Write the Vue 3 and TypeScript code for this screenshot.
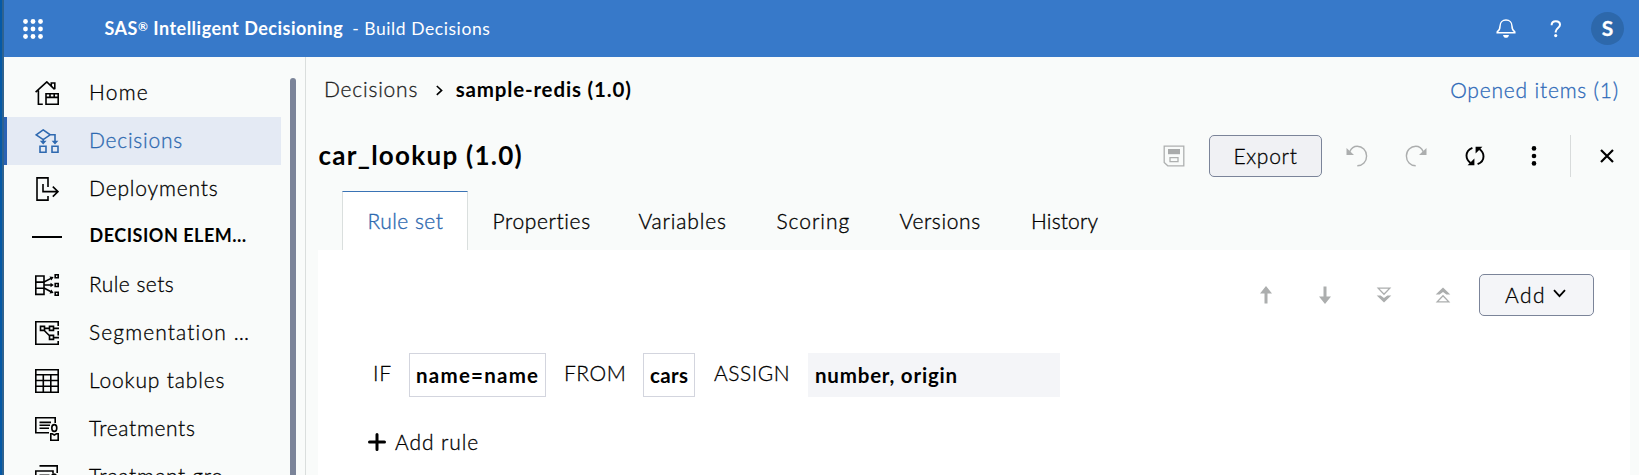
<script setup lang="ts">
interface NavItem {
  label: string
  icon: string
  tracking: number
  active?: boolean
  heading?: boolean
}

const navItems: NavItem[] = [
  { label: 'Home', icon: 'home', tracking: 1.2 },
  { label: 'Decisions', icon: 'decisions', tracking: 0.75, active: true },
  { label: 'Deployments', icon: 'deployments', tracking: 0.83 },
  { label: 'DECISION ELEM…', icon: 'line', tracking: 0.52, heading: true },
  { label: 'Rule sets', icon: 'rules', tracking: 0.45 },
  { label: 'Segmentation …', icon: 'segment', tracking: 1.12 },
  { label: 'Lookup tables', icon: 'table', tracking: 0.85 },
  { label: 'Treatments', icon: 'treatment', tracking: 0.65 },
  { label: 'Treatment gro', icon: 'group', tracking: 0.65 },
]

const tabs = [
  { label: 'Rule set', tracking: 0.45 },
  { label: 'Properties', tracking: 0.6 },
  { label: 'Variables', tracking: 0.83 },
  { label: 'Scoring', tracking: 0.95 },
  { label: 'Versions', tracking: 0.6 },
  { label: 'History', tracking: 0.15 },
]
const activeTab = 'Rule set'
</script>

<template>
  <div class="app">
    <div class="edge"></div>
    <div class="shell">
      <header class="topbar">
        <svg class="launcher" width="20" height="20" viewBox="0 0 20 20">
          <template v-for="r in 3" :key="r">
            <circle v-for="c in 3" :key="c" :cx="c * 7.5 - 5" :cy="r * 7.5 - 5" r="2.4" fill="#fff" />
          </template>
        </svg>
        <span class="product">SAS<span class="mark">®</span> Intelligent Decisioning</span>
        <span class="area">- Build Decisions</span>
        <div class="top-actions">
          <svg class="bell" width="20" height="20" viewBox="0 0 20 20" fill="none" stroke="#fff" stroke-width="1.5">
            <path d="M1.2 13.8H18.8V12.8C16.6 11.4 16 10.3 16 7.2C16 3.5 13.4 1.1 10 1.1S4 3.5 4 7.2C4 10.3 3.4 11.4 1.2 12.8Z" />
            <path d="M7 16H13C12.6 18 11.4 18.8 10 18.8S7.4 18 7 16Z" fill="#fff" stroke="none" />
          </svg>
          <svg class="help" width="12" height="18" viewBox="0 0 12 18" fill="none" stroke="#fff" stroke-width="2">
            <path d="M1.6 5.2C1.6 2.6 3.3 1.3 5.8 1.3S10 2.7 10 4.8C10 7.9 5.7 8.2 5.7 11.8V12.4" />
            <circle cx="5.7" cy="15.6" r="1.6" fill="#fff" stroke="none" />
          </svg>
          <div class="avatar">S</div>
        </div>
      </header>

      <div class="body">
        <nav class="sidebar">
          <ul class="nav">
            <li v-for="item in navItems" :key="item.label" class="nav-item" :class="{ active: item.active, heading: item.heading }">
              <svg v-if="item.icon === 'line'" class="rule" width="30" height="2" viewBox="0 0 30 2"><path d="M0 1H30" stroke="#000" stroke-width="2" /></svg>
              <svg v-else class="nav-icon" width="24" height="24" viewBox="0 0 24 24" fill="none" stroke="currentColor" stroke-width="1.6">
                <g v-if="item.icon === 'home'">
                  <path d="M.6 11.2L11.8.9L19.6 8.3M3.4 9.5V23.2H7.8M16.3 4.8V2H19.8V8.3" />
                  <path d="M11 12.8H23.2V23.2H11ZM11 16.4H23.2M15 12.8V16.4M19.2 12.8V16.4" />
                </g>
                <g v-else-if="item.icon === 'decisions'">
                  <path d="M1.2 5.8L8.2.9L15.2 5.8L8.2 10.6ZM15.2 5.8H20V13M8.2 10.6V13M5 17.3H11V23.2H5ZM17 17.3H23V23.2H17Z" />
                  <path d="M4.8 11.8H11.6L8.2 15.6ZM16.6 11.8H23.4L20 15.6Z" fill="currentColor" stroke="none" />
                </g>
                <g v-else-if="item.icon === 'deployments'">
                  <path d="M13 10V.9H2V23.1H13V19" />
                  <path d="M8 7V14.6H23M17.8 9.6L23 14.6L17.8 19.6" />
                </g>
                <g v-else-if="item.icon === 'rules'">
                  <path d="M.8 3H9V21.4H.8ZM.8 9.1H9M.8 15.3H9" />
                  <path d="M9 9L17 4.9M9 12H17M9 15L17 19.2" />
                  <path d="M14.5 3.6L18.6 4L16.4 7.4ZM15.5 9.8L18.8 12L15.5 14.2ZM16.4 16.6L18.6 20L14.5 20.4Z" fill="currentColor" stroke="none" />
                  <path d="M20.2 1.7H23.2V4.7H20.2ZM20.2 10.5H23.2V13.5H20.2ZM20.2 19.3H23.2V22.3H20.2Z" />
                </g>
                <g v-else-if="item.icon === 'segment'">
                  <path d="M23.2 5V.8H.8V23.2H23.2V20M23.2 10V14.5" />
                  <path d="M5.5 5.4H9.5V9.4H5.5ZM14.5 5.4H18.5V9.4H14.5ZM14.5 14.4H18.5V18.4H14.5ZM9.5 7.4H14.5M18.5 7.4H24M18.5 16.6H24M9 9.2L14.8 15" />
                </g>
                <path v-else-if="item.icon === 'table'" d="M.8.8H23.2V23.2H.8ZM.8 5.8H23.2M.8 11.5H23.2M.8 17.2H23.2M8.3 5.8V23M15.8 5.8V23" />
                <g v-else-if="item.icon === 'treatment'">
                  <path d="M14 15.8H.8V.8H20.2V6M4.5 5.4H16M4.5 8.3H15M4.5 11.2H14" />
                  <ellipse cx="19.3" cy="11" rx="2.5" ry="3.4" />
                  <path d="M15.8 23.2V16.8H17.2L19.3 18L21.5 16.8H23.2V23.2Z" />
                </g>
                <g v-else>
                  <path d="M4.5.9H22.2V8M.8 21V6H18V8.5M4.5 10.4H14.5M4.5 13.4H14" />
                  <ellipse cx="19" cy="12.5" rx="2.5" ry="3.4" />
                </g>
              </svg>
              <span class="nav-label" :style="{ letterSpacing: item.tracking + 'px' }">{{ item.label }}</span>
            </li>
          </ul>
          <div class="scrollbar"></div>
        </nav>

        <main class="main">
          <div class="crumbs">
            <span class="crumb">Decisions</span>
            <svg class="crumb-sep" width="7" height="11" viewBox="0 0 7 11" fill="none" stroke="#000" stroke-width="1.6"><path d="M.8 1L5.6 5.4L.8 9.8" /></svg>
            <span class="crumb-current">sample-redis (1.0)</span>
            <span class="opened">Opened items (1)</span>
          </div>

          <div class="titlebar">
            <h1 class="title">car_lookup (1.0)</h1>
            <svg class="save" width="22" height="22" viewBox="0 0 22 22" fill="none" stroke="#aeb0b0" stroke-width="1.3">
              <path d="M1.2 1.2H20.8V20.8H4.8L1.2 17.4Z" />
              <path d="M5 4H17V9.2H5Z" fill="#a9abab" stroke="none" />
              <path d="M7 12.6H15V16.6H7Z" />
            </svg>
            <button class="btn export">Export</button>
            <div class="icon-btn muted">
              <svg width="22" height="22" viewBox="0 0 22 22" fill="none" stroke="currentColor" stroke-width="1.4">
                <path d="M3.8 6.6C5.3 3.2 8 1.3 11.2 1.3C16.3 1.3 20.6 5.3 20.6 11S16.6 20.8 11.3 20.8" />
                <path d="M.5 3V10.1H8Z" fill="currentColor" stroke="none" />
              </svg>
            </div>
            <div class="icon-btn muted">
              <svg width="22" height="22" viewBox="0 0 22 22" fill="none" stroke="currentColor" stroke-width="1.4">
                <path d="M18.2 6.6C16.7 3.2 14 1.3 10.8 1.3C5.7 1.3 1.4 5.3 1.4 11S5.4 20.8 10.7 20.8" />
                <path d="M21.5 3V10.1H14Z" fill="currentColor" stroke="none" />
              </svg>
            </div>
            <div class="icon-btn">
              <svg width="20" height="20" viewBox="0 0 20 20" fill="none" stroke="currentColor" stroke-width="1.9">
                <path d="M7.4 1.8C3.6 3.4 1.5 6.2 1.5 9.6C1.5 13 3.2 15.3 5.6 17" />
                <path d="M12.6 18.2C16.4 16.6 18.5 13.8 18.5 10.4C18.5 7 16.8 4.7 14.4 3" />
                <path d="M2.6 19.3H9.4V12.4ZM17.4.7H10.6V7.6Z" fill="currentColor" stroke="none" />
              </svg>
            </div>
            <div class="icon-btn">
              <svg width="6" height="20" viewBox="0 0 6 20"><circle cx="3" cy="2.4" r="2.3" /><circle cx="3" cy="10" r="2.3" /><circle cx="3" cy="17.4" r="2.3" /></svg>
            </div>
            <div class="divider"></div>
            <svg class="close" width="14" height="14" viewBox="0 0 14 14" stroke="#000" stroke-width="2.2"><path d="M1 1L13 13M13 1L1 13" /></svg>
          </div>

          <div class="tabs">
            <div v-for="tab in tabs" :key="tab.label" class="tab" :class="{ selected: tab.label === activeTab }" :style="{ letterSpacing: tab.tracking + 'px' }">{{ tab.label }}</div>
          </div>

          <section class="panel">
            <div class="toolbar">
              <div class="icon-btn muted"><svg width="12" height="18" viewBox="0 0 12 18" fill="currentColor"><path d="M6 0L12 7.4H7.5V17.5H4.5V7.4H0Z" /></svg></div>
              <div class="icon-btn muted"><svg width="12" height="18" viewBox="0 0 12 18" fill="currentColor"><path d="M6 18L12 10.6H7.5V.5H4.5V10.6H0Z" /></svg></div>
              <div class="icon-btn muted">
                <svg width="16" height="16" viewBox="0 0 16 16"><path d="M2.2 1.2H13.8L8 7.2Z" fill="none" stroke="currentColor" stroke-width="1.3" /><path d="M.7 8.4H4.6L8 11L11.4 8.4H15.3L8 15.6Z" fill="currentColor" /></svg>
              </div>
              <div class="icon-btn muted">
                <svg width="16" height="16" viewBox="0 0 16 16"><path d="M2.2 14.8H13.8L8 8.8Z" fill="none" stroke="currentColor" stroke-width="1.3" /><path d="M.7 7.6H4.6L8 5L11.4 7.6H15.3L8 .4Z" fill="currentColor" /></svg>
              </div>
              <button class="btn add">
                <span>Add</span>
                <svg width="13" height="9" viewBox="0 0 13 9" fill="none" stroke="#000" stroke-width="1.8"><path d="M1 1.2L6.5 7.2L12 1.2" /></svg>
              </button>
            </div>

            <div class="rule-row">
              <span class="kw kw-if">IF</span>
              <div class="field match">name=name</div>
              <span class="kw kw-from">FROM</span>
              <div class="field table">cars</div>
              <span class="kw kw-assign">ASSIGN</span>
              <div class="field output">number, origin</div>
            </div>

            <div class="add-rule">
              <svg width="18" height="18" viewBox="0 0 18 18" stroke="#000" stroke-width="3" stroke-linecap="round"><path d="M9 1.5V16.5M1.5 9H16.5" /></svg>
              <span>Add rule</span>
            </div>
          </section>
        </main>
      </div>
    </div>
  </div>
</template>

<style>
html,
body {
  margin: 0;
  overflow: hidden;
}
</style>

<style scoped>
.app {
  display: flex;
  width: 1639px;
  height: 475px;
  overflow: hidden;
  background: #f9fbfa;
  color: #000;
  font-family: Lato, 'Open Sans', sans-serif;
  font-size: 21px;
  font-weight: 300;
  -webkit-text-stroke: 0.3px currentColor;
}
.edge {
  box-sizing: border-box;
  width: 4px;
  background: #0559a6;
  border-right: 2px solid #2e628f;
}
.shell {
  flex: 1;
  min-width: 0;
}
.topbar {
  display: flex;
  align-items: center;
  height: 57px;
  background: #3779c9;
  color: #fff;
  font-size: 17.5px;
  line-height: 21px;
  padding-left: 18.5px;
  box-sizing: border-box;
}
.launcher {
  margin-right: 62px;
}
.product {
  font-weight: 700;
  font-size: 18px;
  letter-spacing: 0.49px;
  margin-right: 9px;
  padding-bottom: 1px;
  -webkit-text-stroke: 0;
}
.mark {
  display: inline-block;
  font-size: 12px;
  line-height: 12px;
  vertical-align: 4px;
}
.area {
  font-weight: 400;
  letter-spacing: 0.57px;
  padding-bottom: 1px;
  -webkit-text-stroke: 0;
}
.top-actions {
  display: flex;
  align-items: center;
  margin-left: auto;
  margin-right: 15px;
}
.bell {
  margin-right: 34px;
}
.help {
  margin-right: 29.5px;
}
.avatar {
  width: 33px;
  height: 33px;
  line-height: 32px;
  border-radius: 50%;
  background: #2d68ab;
  text-align: center;
  font-size: 21px;
  font-weight: 700;
}
.body {
  display: flex;
  height: 418px;
}
.sidebar {
  display: flex;
  box-sizing: border-box;
  width: 302px;
  border-right: 1px solid #dadedd;
}
.nav {
  width: 277px;
  height: 406px;
  margin: 12px 9px 0 0;
  padding: 0;
  list-style: none;
  overflow: hidden;
}
.nav-item {
  display: flex;
  align-items: center;
  box-sizing: border-box;
  height: 48px;
  padding-left: 28px;
  border-left: 3px solid transparent;
  white-space: nowrap;
}
.nav-item.active {
  background: #e4eaf4;
  border-left-color: #2a62b4;
  color: #2e69b0;
}
.nav-icon {
  flex: none;
  margin-right: 30px;
}
.nav-label {
  padding-bottom: 4px;
}
.nav-item.heading {
  padding-left: 25px;
  font-size: 18px;
  font-weight: 700;
  -webkit-text-stroke: 0;
}
.rule {
  flex: none;
  margin-right: 27.5px;
}
.scrollbar {
  width: 6px;
  margin-top: 21px;
  border-radius: 3px 3px 0 0;
  background: #7b8499;
}
.main {
  display: flex;
  flex-direction: column;
  flex: 1;
  min-width: 0;
}
.crumbs {
  display: flex;
  align-items: center;
  height: 64px;
  padding: 0 20px 0 18px;
}
.crumb {
  padding-bottom: 2px;
  color: #222;
  letter-spacing: 0.78px;
}
.crumb-sep {
  margin: 3px 13px 0 17.5px;
}
.crumb-current {
  padding-bottom: 1px;
  font-size: 20.5px;
  font-weight: 700;
  letter-spacing: 0.84px;
  -webkit-text-stroke: 0;
}
.opened {
  margin-left: auto;
  color: #2e69b8;
  letter-spacing: 0.8px;
}
.titlebar {
  display: flex;
  align-items: center;
  height: 70px;
  padding: 0 25.5px 0 12.5px;
}
.title {
  margin: 0 auto 0 0;
  padding-bottom: 3px;
  font-size: 26px;
  font-weight: 700;
  letter-spacing: 1.27px;
  -webkit-text-stroke: 0;
}
.save {
  margin-right: 24px;
}
.btn {
  display: flex;
  align-items: center;
  justify-content: center;
  box-sizing: border-box;
  height: 42px;
  padding: 0 0 1px;
  border: 1px solid #7b8499;
  border-radius: 5px;
  background: #f0f1f4;
  color: #000;
  font: inherit;
  -webkit-text-stroke: inherit;
}
.export {
  width: 113px;
  margin-right: 5.5px;
  letter-spacing: 0.7px;
}
.icon-btn {
  display: flex;
  align-items: center;
  justify-content: center;
  width: 59px;
  height: 42px;
}
.muted {
  color: #acaeae;
}
.divider {
  width: 1px;
  height: 42px;
  margin: 0 29px 0 6px;
  background: #d8dbdb;
}
.tabs {
  display: grid;
  grid-template-columns: 126px 146px 138px 123px 131.5px auto;
  height: 59px;
  padding-left: 36px;
}
.tab {
  box-sizing: border-box;
  padding-left: 24.5px;
  line-height: 60px;
  -webkit-text-stroke-width: 0.35px;
}
.tab.selected {
  border: 1px solid #dadfde;
  border-top-color: #3a73b5;
  border-bottom: 0;
  background: #fff;
  color: #2e69b0;
  line-height: 58px;
}
.panel {
  flex: 1;
  margin: 0 9px 0 12px;
  background: #fff;
}
.toolbar {
  display: flex;
  align-items: center;
  justify-content: flex-end;
  padding: 24px 36px 0 0;
}
.add {
  width: 115px;
  margin-left: 6.5px;
  padding-right: 2px;
  gap: 7px;
  background: #f4f5f8;
  letter-spacing: 1.4px;
}
.add svg {
  margin-bottom: 2px;
}
.rule-row {
  display: flex;
  height: 44px;
  margin-top: 37px;
  padding-left: 55px;
  line-height: 40px;
}
.kw-if {
  width: 36px;
  letter-spacing: 0.8px;
}
.kw-from {
  width: 79px;
  padding-left: 18px;
  letter-spacing: 0.5px;
}
.kw-assign {
  width: 94px;
  padding-left: 19px;
  letter-spacing: 0.5px;
}
.field {
  box-sizing: border-box;
  height: 44px;
  padding-left: 6px;
  border: 1px solid #d3d5de;
  font-size: 20.5px;
  font-weight: 700;
  line-height: 42px;
  -webkit-text-stroke: 0;
}
.match {
  width: 137px;
  letter-spacing: 1.25px;
}
.table {
  width: 52px;
  letter-spacing: 0.4px;
}
.output {
  width: 252px;
  border-color: #f4f5f8;
  background: #f4f5f8;
  line-height: 43px;
  letter-spacing: 0.8px;
}
.add-rule {
  display: flex;
  align-items: center;
  gap: 9px;
  margin-top: 32px;
  padding-left: 50px;
  letter-spacing: 0.9px;
}
.add-rule span {
  padding-bottom: 1px;
}
</style>
